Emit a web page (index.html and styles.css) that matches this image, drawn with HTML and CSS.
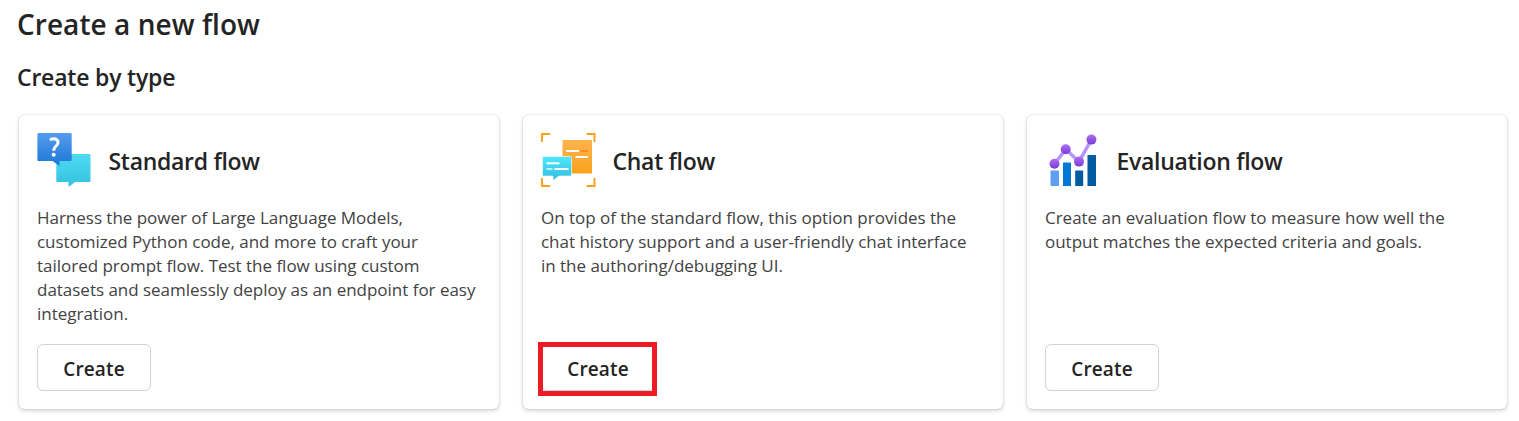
FILE: index.html
```html
<!DOCTYPE html>
<html lang="en">
<head>
<meta charset="utf-8">
<title>Create a new flow</title>
<link rel="stylesheet" href="styles.css">
</head>
<body>
<main class="page">
  <h1 class="page-title"><span>Create a new flow</span></h1>
  <h2 class="section-title"><span>Create by type</span></h2>
  <div class="cards">
    <section class="card">
      <header class="card-head">
        <svg class="icon" viewBox="0 0 54 54">
          <defs>
            <linearGradient id="blue" x1="0" y1="0" x2="0" y2="1"><stop offset="0" stop-color="#559cec"/><stop offset="1" stop-color="#1a78d6"/></linearGradient>
            <linearGradient id="teal" x1="0" y1="0" x2="0" y2="1"><stop offset="0" stop-color="#4cdcf0"/><stop offset="1" stop-color="#35c1e2"/></linearGradient>
          </defs>
          <path fill="url(#teal)" d="M20.300 21H52.500Q53.500 21 53.500 22V48Q53.500 49 52.500 49H38L31.500 54V49H20.300Q19.300 49 19.300 48V22Q19.300 21 20.300 21Z"/>
          <path fill="url(#blue)" d="M1.500 0H33.500Q34.700 0 34.700 1.200V27Q34.700 28 33.500 28H22.500V33L15.500 28H1.500Q.400 28 .400 27V1.200Q.400 0 1.500 0Z"/>
          <path class="question" d="M13 7.100C16.500 4.900 21 5.700 21 9.400C21 13 16.700 13.200 16.700 17.700"/>
          <circle cx="16.700" cy="21.700" r="2" fill="#fff"/>
        </svg>
        <h3 class="card-title"><span>Standard flow</span></h3>
      </header>
      <p class="card-text">Harness the power of Large Language Models,<br>customized Python code, and more to craft your<br>tailored prompt flow. Test the flow using custom<br>datasets and seamlessly deploy as an endpoint for easy<br>integration.</p>
      <button class="create">Create</button>
    </section>
    <section class="card">
      <header class="card-head">
        <svg class="icon" viewBox="0 0 54 54">
          <defs>
            <linearGradient id="orange" x1="0" y1="0" x2="0" y2="1"><stop offset="0" stop-color="#ffb34d"/><stop offset="1" stop-color="#faa21d"/></linearGradient>
            <linearGradient id="cyan" x1="0" y1="0" x2="0" y2="1"><stop offset="0" stop-color="#50e6ff"/><stop offset="1" stop-color="#32bedd"/></linearGradient>
          </defs>
          <path class="corners" d="M1 9V1H9M45.500 1H53.500V9M1 45V53H9M45.500 53H53.500V45"/>
          <rect x="21.500" y="7" width="29.500" height="33.500" rx="1" fill="url(#orange)"/>
          <rect x="25" y="17" width="13" height="2" fill="#fff"/>
          <rect x="40" y="17" width="7" height="2" fill="#f78d1e"/>
          <rect x="34.500" y="23" width="12.500" height="2" fill="#fff"/>
          <path d="M2.500 23.500H29.500Q30.500 23.500 30.500 24.500V42Q30.500 43 29.500 43H18L12 47.500V43H2.500Q1.500 43 1.500 42V24.500Q1.500 23.500 2.500 23.500Z" fill="url(#cyan)" stroke="#fff" stroke-width=".6"/>
          <rect x="5.500" y="29.300" width="13" height="2" fill="#fff"/>
          <rect x="5.500" y="35" width="6" height="2" fill="#b3f2ff"/>
          <rect x="13.500" y="35" width="14" height="2" fill="#fff"/>
        </svg>
        <h3 class="card-title"><span>Chat flow</span></h3>
      </header>
      <p class="card-text">On top of the standard flow, this option provides the<br>chat history support and a user-friendly chat interface<br>in the authoring/debugging UI.</p>
      <button class="create highlighted">Create</button>
    </section>
    <section class="card">
      <header class="card-head">
        <svg class="icon" viewBox="0 0 54 54">
          <defs>
            <linearGradient id="purple" x1="0" y1="0" x2="0" y2="1"><stop offset="0" stop-color="#ae70ec"/><stop offset="1" stop-color="#773adc"/></linearGradient>
          </defs>
          <rect x="5.500" y="37.500" width="8.500" height="15.500" rx=".5" fill="#5ea0ef"/>
          <rect x="18" y="29.500" width="8" height="23.500" rx=".5" fill="#0078d4"/>
          <rect x="30.200" y="37.500" width="8" height="15.500" rx=".5" fill="#005ba1"/>
          <rect x="42.500" y="22" width="8.500" height="31" rx=".5" fill="#005ba1"/>
          <path class="trend" d="M9.500 31L20.700 16.300L34 28.700L46.500 6.500"/>
          <g fill="url(#purple)"><circle cx="9.500" cy="30.700" r="5"/><circle cx="20.700" cy="16.200" r="5"/><circle cx="34" cy="28.600" r="5"/><circle cx="46.400" cy="6.600" r="5"/></g>
        </svg>
        <h3 class="card-title"><span>Evaluation flow</span></h3>
      </header>
      <p class="card-text">Create an evaluation flow to measure how well the<br>output matches the expected criteria and goals.</p>
      <button class="create">Create</button>
    </section>
  </div>
</main>
</body>
</html>
```
FILE: styles.css
```css
* { box-sizing: border-box; }
body { margin: 0; background: #fff; color: #242424; font-family: "Segoe UI", "Open Sans", "Noto Sans", sans-serif; }
h1, h2, h3, p { margin: 0; font-weight: 600; }
.page { padding: 5px 12px 12px 19px; }
.page-title { font-size: 28px; line-height: 38px; margin-left: -2px; letter-spacing: 0.05px; }
.section-title { font-size: 23px; line-height: 32px; margin: 18px 0 0 -2px; letter-spacing: -0.2px; }
.cards { display: grid; grid-template-columns: repeat(3, 480px); gap: 24px; margin-top: 22px; }
.card { display: flex; flex-direction: column; align-items: flex-start; height: 294px; padding: 18px; border-radius: 6px; background: #fff; box-shadow: 0 0 2px rgba(0,0,0,.16), 0 2px 4px rgba(0,0,0,.16); }
.card-head { display: flex; align-items: center; gap: 17.500px; height: 54px; }
.icon { width: 54px; height: 54px; flex: none; overflow: visible; }
.card-title { font-size: 23px; line-height: 32px; letter-spacing: -0.3px; padding-top: 2px; }
.card-text { margin-top: 19px; font-size: 17px; line-height: 24px; font-weight: 400; color: #424242; letter-spacing: -0.02px; white-space: nowrap; }
.create { position: relative; width: 114px; height: 47px; margin-top: auto; padding: 3px 0 0; border: 1px solid #d1d1d1; border-radius: 6px; background: #fff; color: #242424; font: 600 19px/28px "Segoe UI", "Open Sans", "Noto Sans", sans-serif; letter-spacing: 0.15px; }
.highlighted::after { content: ""; position: absolute; inset: -3px -3px -6px -4px; border: 5px solid #ed1c24; }
.question { fill: none; stroke: #fff; stroke-width: 3; }
.corners { fill: none; stroke: #faa21d; stroke-width: 2; }
.trend { fill: none; stroke: #b796f9; stroke-width: 3.5; }
```
